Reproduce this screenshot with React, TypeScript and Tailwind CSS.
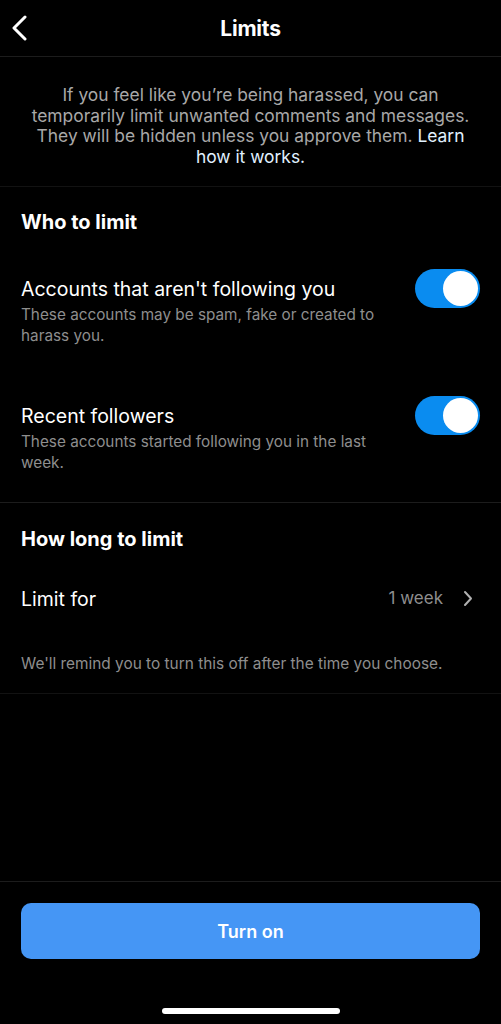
import React, { useState } from 'react';

// Small iOS-style switch
const Toggle = ({ on, onChange }: { on: boolean; onChange: () => void }) => (
  <button
    onClick={onChange}
    className={`relative shrink-0 w-[65px] h-[39px] rounded-full ${on ? 'bg-[#0a8cf0]' : 'bg-[#39393d]'}`}
  >
    <span
      className={`absolute top-[2px] w-[35px] h-[35px] rounded-full bg-white ${on ? 'left-[28px]' : 'left-[2px]'}`}
    />
  </button>
);

const rows = [
  {
    title: "Accounts that aren't following you",
    sub: 'These accounts may be spam, fake or created to harass you.',
  },
  {
    title: 'Recent followers',
    sub: 'These accounts started following you in the last week.',
  },
];

export default function App() {
  const [toggles, setToggles] = useState([true, true]);

  return (
    <div className="w-[501px] h-[1024px] bg-black text-white flex flex-col font-['Inter',sans-serif]">
      {/* Header */}
      <header className="relative h-[57px] flex items-center justify-center border-b border-[#1c1c1c]">
        <svg
          className="absolute left-[10px] top-[15px]"
          width="18"
          height="26"
          viewBox="0 0 18 26"
          fill="none"
          stroke="white"
          strokeWidth="3"
          strokeLinecap="round"
          strokeLinejoin="round"
        >
          <path d="M15 2 L4 13 L15 24" />
        </svg>
        <h1 className="text-[21px] font-bold tracking-[-0.2px] mt-[1px]">Limits</h1>
      </header>

      {/* Intro */}
      <div className="px-[20px] pt-[28px] pb-[19px] border-b border-[#121212] text-center text-[17.4px] leading-[20.5px] text-[#a8a8a8]">
        If you feel like you’re being harassed, you can
        <br />
        temporarily limit unwanted comments and messages.
        <br />
        They will be hidden unless you approve them. <span className="text-[#e0f1ff]">Learn</span>
        <br />
        <span className="text-[#e0f1ff]">how it works.</span>
      </div>

      {/* Who to limit */}
      <section className="px-[21px] pt-[23px] pb-[29px] border-b border-[#1c1c1c]">
        <h2 className="text-[20px] leading-[24px] font-bold">Who to limit</h2>
        <div className="flex flex-col gap-[58px] mt-[43px]">
          {rows.map((r, i) => (
            <div key={r.title} className="flex items-start justify-between">
              <div className="w-[365px]">
                <div className="text-[19.5px] leading-[24px]">{r.title}</div>
                <div className="mt-[3px] text-[15.3px] leading-[21px] text-[#8e8e8e]">{r.sub}</div>
              </div>
              <div className="-mt-[8px]">
                <Toggle
                  on={toggles[i]}
                  onChange={() => setToggles(toggles.map((t, j) => (j === i ? !t : t)))}
                />
              </div>
            </div>
          ))}
        </div>
      </section>

      {/* How long to limit */}
      <section className="px-[21px] pt-[24px] pb-[19px] border-b border-[#121212]">
        <h2 className="text-[20px] leading-[24px] font-bold">How long to limit</h2>
        <div className="mt-[35px] flex items-center justify-between">
          <span className="text-[19.5px] leading-[24px]">Limit for</span>
          <div className="flex items-center gap-[20px] pr-[7px]">
            <span className="text-[17px] text-[#8e8e8e]">1 week</span>
            <svg width="10" height="17" viewBox="0 0 10 17" fill="none" stroke="#b0b0b0" strokeWidth="2" strokeLinecap="round" strokeLinejoin="round">
              <path d="M2 2 L8 8.5 L2 15" />
            </svg>
          </div>
        </div>
        <p className="mt-[41px] text-[15.4px] leading-[21px] text-[#8e8e8e]">
          We'll remind you to turn this off after the time you choose.
        </p>
      </section>

      <div className="flex-1" />

      {/* Footer */}
      <footer className="border-t border-[#1c1c1c] pt-[21px] px-[21px]">
        <button className="w-full h-[56px] rounded-[10px] bg-[#4596f5] text-[18px] font-semibold text-white">
          Turn on
        </button>
        <div className="h-[65px] flex items-end justify-center pb-[10px]">
          <div className="w-[178px] h-[6px] rounded-full bg-white" />
        </div>
      </footer>
    </div>
  );
}
